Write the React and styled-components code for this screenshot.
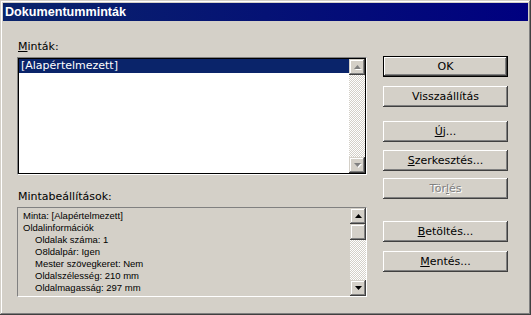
import React from "react";
import styled, { createGlobalStyle } from "styled-components";

const GlobalStyle = createGlobalStyle`
  html, body {
    margin: 0;
    padding: 0;
    background: #d4d0c8;
  }
  body {
    font-family: "DejaVu Sans", "Liberation Sans", sans-serif;
  }
`;

const Dialog = styled.div`
  box-sizing: border-box;
  width: 531px;
  height: 315px;
  padding: 3px;
  background: #d4d0c8;
  box-shadow: inset -1px -1px #404040, inset 1px 1px #d4d0c8,
    inset -2px -2px #808080, inset 2px 2px #ffffff;
  display: flex;
  flex-direction: column;
`;

const TitleBar = styled.div`
  height: 18px;
  line-height: 18px;
  padding-left: 2px;
  background: linear-gradient(to right, #0a246a, #000080);
  color: #ffffff;
  font-family: "Liberation Sans", sans-serif;
  font-weight: bold;
  font-size: 12.6px;
`;

const Content = styled.div`
  display: flex;
  gap: 16px;
  padding: 19px 20px 0 14px;
`;

const LeftColumn = styled.div`
  width: 350px;
  display: flex;
  flex-direction: column;
`;

const Label = styled.div`
  height: 13px;
  line-height: 13px;
  margin-top: ${p => p.$top || 0}px;
  margin-bottom: 4px;
  padding-left: 1px;
  font-family: "DejaVu Sans", sans-serif;
  font-size: 11px;
  color: #000;
`;

const ListBox = styled.div`
  box-sizing: border-box;
  height: 118px;
  display: flex;
  background: #ffffff;
  border: 1px solid;
  border-color: #808080 #ffffff #ffffff #808080;
  box-shadow: inset 0 0 0 1px #000000;
  padding: 1px;
`;

const ListItems = styled.div`
  flex: 1;
`;

const ListItem = styled.div`
  height: 14px;
  line-height: 14px;
  padding-left: 2px;
  font-family: "DejaVu Sans", sans-serif;
  font-size: 11px;
  color: ${p => (p.$selected ? "#ffffff" : "#000000")};
  background: ${p => (p.$selected ? "#0a246a" : "transparent")};
`;

const InfoBox = styled.div`
  box-sizing: border-box;
  height: 90px;
  display: flex;
  border: 1px solid;
  border-color: #808080 #ffffff #ffffff #808080;
  background: #d4d0c8;
`;

const InfoLines = styled.div`
  flex: 1;
  padding: 2px 0 0 5px;
  overflow: hidden;
`;

const InfoLine = styled.div`
  height: 12px;
  line-height: 12px;
  padding-left: ${p => (p.$indent ? 12 : 0)}px;
  font-family: "Liberation Sans", sans-serif;
  font-size: 9.5px;
  color: #000;
  white-space: nowrap;
`;

const ScrollBar = styled.div`
  width: 16px;
  display: flex;
  flex-direction: column;
`;

const ScrollButton = styled.div`
  box-sizing: border-box;
  width: 16px;
  height: 16px;
  background: #d4d0c8;
  box-shadow: inset -1px -1px #404040, inset 1px 1px #d4d0c8,
    inset -2px -2px #808080, inset 2px 2px #ffffff;
  display: flex;
  align-items: center;
  justify-content: center;
`;

const Track = styled.div`
  flex: 1;
  background-color: #ffffff;
  background-image: repeating-conic-gradient(#d4d0c8 0 25%, #ffffff 0 50%);
  background-size: 2px 2px;
`;

const Arrow = ({ down, disabled }) => (
  <svg width="7" height="4" viewBox="0 0 7 4" style={{ overflow: "visible" }}>
    {disabled && (
      <polygon
        transform="translate(1 1)"
        points={down ? "0,0 7,0 3.5,4" : "3.5,0 7,4 0,4"}
        fill="#ffffff"
      />
    )}
    <polygon
      points={down ? "0,0 7,0 3.5,4" : "3.5,0 7,4 0,4"}
      fill={disabled ? "#808080" : "#000000"}
    />
  </svg>
);

const RightColumn = styled.div`
  width: 125px;
  display: flex;
  flex-direction: column;
`;

const Button = styled.div`
  box-sizing: border-box;
  width: 125px;
  height: 21px;
  margin-top: ${p => p.$top}px;
  display: flex;
  align-items: center;
  justify-content: center;
  background: #d4d0c8;
  font-family: "DejaVu Sans", sans-serif;
  font-size: 11px;
  color: ${p => (p.$disabled ? "#808080" : "#000000")};
  text-shadow: ${p => (p.$disabled ? "1px 1px #ffffff" : "none")};
  box-shadow: ${p =>
    p.$default
      ? "inset 0 0 0 1px #000, inset -2px -2px #404040, inset 2px 2px #ffffff, inset -3px -3px #808080"
      : "inset -1px -1px #404040, inset 1px 1px #ffffff, inset -2px -2px #808080"};
  padding-bottom: 1px;
`;

const buttons = [
  { label: "OK", top: 16, isDefault: true },
  { label: "Visszaállítás", top: 9 },
  { label: "Új...", at: 0, top: 14 },
  { label: "Szerkesztés...", at: 0, top: 8 },
  { label: "Törlés", at: 3, top: 7, disabled: true },
  { label: "Betöltés...", at: 0, top: 22 },
  { label: "Mentés...", at: 0, top: 9 },
];

function Mnemonic({ text, at }) {
  if (at === undefined) return text;
  return (
    <>
      {text.slice(0, at)}
      <u>{text[at]}</u>
      {text.slice(at + 1)}
    </>
  );
}

const infoLines = [
  { text: "Minta: [Alapértelmezett]" },
  { text: "Oldalinformációk" },
  { text: "Oldalak száma: 1", indent: true },
  { text: "O8ldalpár: Igen", indent: true },
  { text: "Mester szövegkeret: Nem", indent: true },
  { text: "Oldalszélesség: 210 mm", indent: true },
  { text: "Oldalmagasság: 297 mm", indent: true },
];

export default function App() {
  return (
    <>
      <GlobalStyle />
      <Dialog>
        <TitleBar>Dokumentumminták</TitleBar>
        <Content>
          <LeftColumn>
            <Label>
              <Mnemonic text="Minták:" at={0} />
            </Label>
            <ListBox>
              <ListItems>
                <ListItem $selected>[Alapértelmezett]</ListItem>
              </ListItems>
              <ScrollBar>
                <ScrollButton>
                  <Arrow disabled />
                </ScrollButton>
                <Track />
                <ScrollButton>
                  <Arrow down disabled />
                </ScrollButton>
              </ScrollBar>
            </ListBox>
            <Label $top={15}>Mintabeállítások:</Label>
            <InfoBox>
              <InfoLines>
                {infoLines.map(line => (
                  <InfoLine key={line.text} $indent={line.indent}>
                    {line.text}
                  </InfoLine>
                ))}
              </InfoLines>
              <ScrollBar>
                <ScrollButton>
                  <Arrow />
                </ScrollButton>
                <ScrollButton />
                <Track />
                <ScrollButton>
                  <Arrow down />
                </ScrollButton>
              </ScrollBar>
            </InfoBox>
          </LeftColumn>
          <RightColumn>
            {buttons.map(b => (
              <Button
                key={b.label}
                $top={b.top}
                $default={b.isDefault}
                $disabled={b.disabled}
              >
                <Mnemonic text={b.label} at={b.at} />
              </Button>
            ))}
          </RightColumn>
        </Content>
      </Dialog>
    </>
  );
}
